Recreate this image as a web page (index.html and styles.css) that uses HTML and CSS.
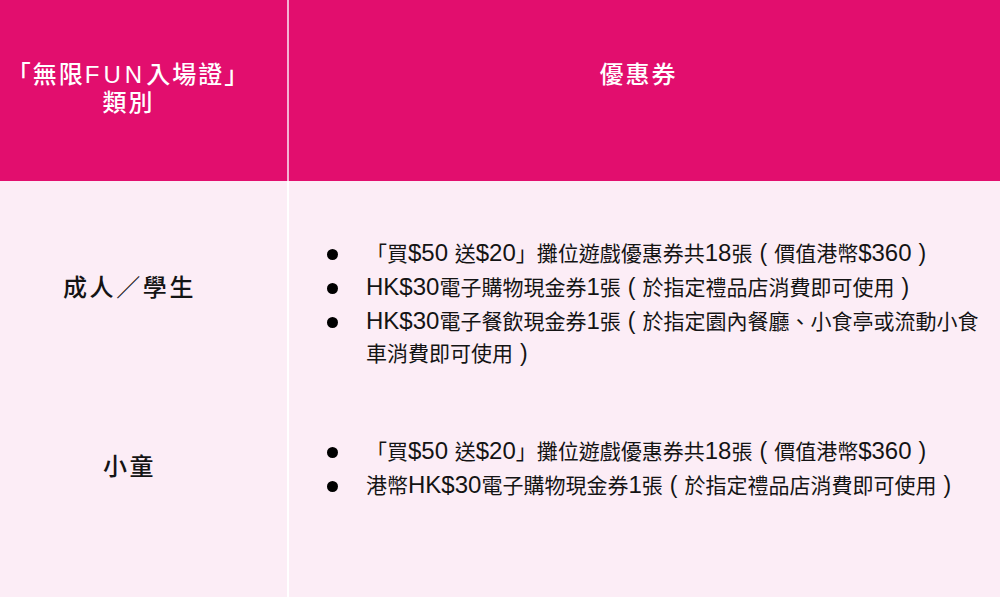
FILE: index.html
```html
<!DOCTYPE html>
<html lang="zh-Hant">
<head>
<meta charset="utf-8">
<title>無限FUN入場證</title>
<link rel="stylesheet" href="styles.css">
</head>
<body>
<div class="table">
  <div class="head-row">
    <div class="cell-left head-left">「無限<span class="fun">FUN</span>入場證」<br>類別</div>
    <div class="cell-right head-right">優惠券</div>
  </div>
  <div class="row row-adult">
    <div class="cell-left body-left">成人／學生</div>
    <div class="cell-right body-right">
      <ul class="list">
        <li><span class="dot"></span><span class="txt">「買<span class="en">$50 </span>送<span class="en">$20</span>」攤位遊戲優惠券共<span class="en">18</span>張<span class="par">(</span>價值港幣<span class="en">$360</span><span class="par">)</span></span></li>
        <li><span class="dot"></span><span class="txt"><span class="en">HK$30</span>電子購物現金券<span class="en">1</span>張<span class="par">(</span>於指定禮品店消費即可使用<span class="par">)</span></span></li>
        <li><span class="dot"></span><span class="txt"><span class="en">HK$30</span>電子餐飲現金券<span class="en">1</span>張<span class="par">(</span>於指定園內餐廳、小食亭或流動小食車消費即可使用<span class="par">)</span></span></li>
      </ul>
    </div>
  </div>
  <div class="row row-child">
    <div class="cell-left body-left">小童</div>
    <div class="cell-right body-right">
      <ul class="list">
        <li><span class="dot"></span><span class="txt">「買<span class="en">$50 </span>送<span class="en">$20</span>」攤位遊戲優惠券共<span class="en">18</span>張<span class="par">(</span>價值港幣<span class="en">$360</span><span class="par">)</span></span></li>
        <li><span class="dot"></span><span class="txt">港幣<span class="en">HK$30</span>電子購物現金券<span class="en">1</span>張<span class="par">(</span>於指定禮品店消費即可使用<span class="par">)</span></span></li>
      </ul>
    </div>
  </div>
</div>
</body>
</html>
```

FILE: styles.css
```css
html, body {
  margin: 0;
  padding: 0;
}
body {
  width: 1000px;
  height: 597px;
  overflow: hidden;
  background: #fcedf6;
  font-family: "Liberation Sans", "Noto Sans CJK TC", sans-serif;
  color: #141414;
}
.table {
  display: flex;
  flex-direction: column;
  height: 597px;
}
.head-row {
  display: flex;
  height: 181px;
  background: #e20e6e;
  color: #ffffff;
}
.cell-left {
  width: 287px;
  flex: none;
  box-sizing: border-box;
  padding-right: 28px;
  text-align: center;
}
.cell-right {
  flex: 1;
  box-sizing: border-box;
}
.head-left,
.head-right {
  font-size: 24px;
  line-height: 28px;
  font-weight: 500;
  letter-spacing: 2px;
  padding-top: 61px;
}
.head-left {
  padding-right: 30px;
}
.fun {
  letter-spacing: 4px;
}
.head-right {
  border-left: 2px solid #f4b3d2;
  text-align: center;
  padding-right: 12px;
}
.row {
  display: flex;
}
.row-adult {
  height: 214px;
}
.row-child {
  flex: 1;
}
.body-left {
  font-size: 24px;
  line-height: 30px;
  font-weight: 500;
  letter-spacing: 2.6px;
  display: flex;
  align-items: center;
  justify-content: center;
}
.row-child .body-left {
  align-items: flex-start;
  padding-top: 57px;
}
.body-right {
  border-left: 2px solid #ffffff;
  padding-right: 14px;
}
.row-adult .body-right {
  padding-top: 57px;
}
.row-child .body-right {
  padding-top: 41px;
}
.list {
  list-style: none;
  margin: 0;
  padding: 0 0 0 38px;
  display: flex;
  flex-direction: column;
  gap: 2px;
}
.list li {
  display: flex;
  font-size: 21px;
  line-height: 32px;
}
.en {
  font-size: 24px;
  line-height: 1;
}
.par {
  font-size: 23px;
  line-height: 1;
  margin: 0 7px;
}
.dot {
  flex: none;
  width: 39px;
  height: 32px;
  position: relative;
}
.dot::before {
  content: "";
  position: absolute;
  left: 0;
  top: 11px;
  width: 11px;
  height: 11px;
  border-radius: 50%;
  background: #000000;
}
.txt {
  flex: 1;
}
```
